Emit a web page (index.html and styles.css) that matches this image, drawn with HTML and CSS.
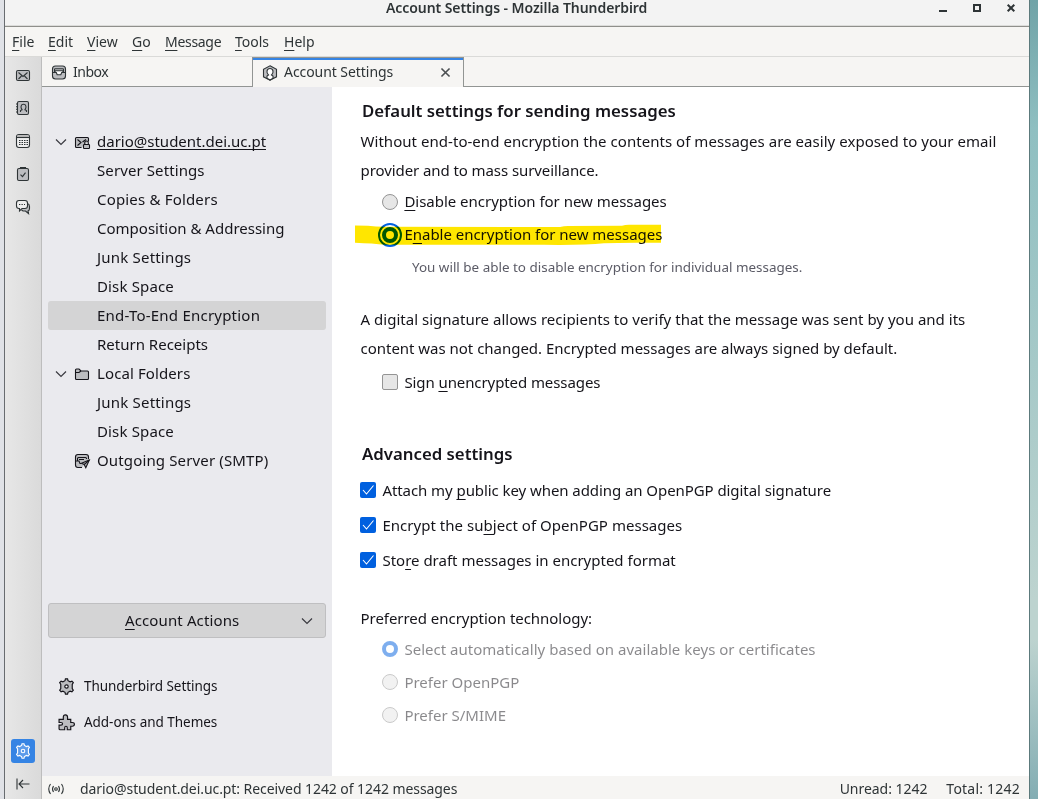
FILE: index.html
```html
<!DOCTYPE html>
<html lang="en">
<head>
<meta charset="utf-8">
<title>Account Settings - Mozilla Thunderbird</title>
<link rel="stylesheet" href="styles.css">
</head>
<body>
<div class="desktop">
<div class="window">
  <header class="titlebar">
    <h1 class="window-title">Account Settings - Mozilla Thunderbird</h1>
    <div class="window-buttons">
      <svg width="8" height="8"><path d="M0 6h8v2H0z" fill="#2e3436"/></svg>
      <svg width="8" height="8"><path d="M1 1h6v6H1z" fill="none" stroke="#2e3436" stroke-width="2"/></svg>
      <svg width="8" height="8"><path d="M.7.7l6.600 6.600M7.300.7L.7 7.300" stroke="#2e3436" stroke-width="2"/></svg>
    </div>
  </header>
  <nav class="menubar">
    <span class="m-file"><u>F</u>ile</span><span class="m-edit"><u>E</u>dit</span><span class="m-view"><u>V</u>iew</span><span class="m-go"><u>G</u>o</span><span class="m-message"><u>M</u>essage</span><span class="m-tools"><u>T</u>ools</span><span class="m-help"><u>H</u>elp</span>
  </nav>
  <div class="body">
    <aside class="spaces">
      <svg class="icon" viewBox="0 0 16 16"><rect class="fill" x="1.500" y="3.500" width="13" height="10" rx="1.500"/><path d="M3.500 5.500l4.500 4 4.500-4M3.500 12l3-3M12.500 12l-3-3"/></svg>
      <svg class="icon" viewBox="0 0 16 16"><rect class="fill" x="2.500" y="1.500" width="11" height="13" rx="1.500"/><path d="M1 4h2M1 6.700h2M1 9.300h2M1 12h2M5.500 12v-1.500l1.500-.8C5.300 7.500 5.800 4.300 8.500 4.300s3.200 3.200 1.500 5.400l1.500.8V12"/></svg>
      <svg class="icon" viewBox="0 0 16 16"><rect x="1.500" y="1.500" width="13" height="13" rx="2.500" fill="#eee"/><path d="M2.500 2h11v2h-11z" fill="#bbb" stroke="none"/><path d="M1.500 4.500h13" /><path d="M4 7.500h9M4 9.500h9M4 11.500h9" stroke-dasharray="1.500 1"/></svg>
      <svg class="icon" viewBox="0 0 16 16"><rect class="fill" x="2.500" y="2.500" width="11" height="12" rx="1.500"/><path d="M5.500 2.500v-1h5v1M5.500 8.700l2 2 3-4"/></svg>
      <svg class="icon" viewBox="0 0 16 16"><path class="fill" d="M12.500 4.500q2 .5 2 3v2q0 2-1.500 2.500l.5 2.500-3-2.500H8l-1.500-1"/><path d="M4 1.500h6q2.500 0 2.500 2.500v3q0 2.500-2.500 2.500H7l-2.500 2.500v-2.500H4Q1.500 9.500 1.500 7V4Q1.500 1.500 4 1.500z" fill="#eee"/><path d="M4 5.500h6" stroke-dasharray="1.300 1.200"/></svg>
      <div class="space-settings"><svg class="icon" viewBox="0 0 16 16"><path d="M6.600 2.500L7 .8h2l.4 1.700 2 1.100 1.700-.6 1.300 1.400-1 1.600v3.900l1 1.600-1.300 1.500-1.700-.6-2 1.100-.4 1.700H7l-.4-1.700-2-1.100-1.700.6-1.300-1.500 1-1.600V6l-1-1.600L2.900 3l1.700.6z"/><circle cx="8" cy="8" r="1.800"/></svg></div>
      <svg class="icon collapse" viewBox="0 0 16 16"><path d="M2 2.500v11M4 8h10.500M8 4L4 8l4 4"/></svg>
    </aside>
    <div class="workspace">
      <div class="tabs">
        <div class="tab tab-inbox"><svg class="icon" viewBox="0 0 16 16"><rect class="fill" x="1.500" y="2" width="13" height="13" rx="3"/><path d="M1.500 8.500h2V5.500q0-.8.800-.8h7.400q.8 0 .8.800v3h2"/><path d="M4.500 6.700h7M3.500 8.500h1.800l.9 2.300h3.600l.9-2.300h1.800l-1-1.800h-7z" fill="#fff"/></svg><span class="t-inbox">Inbox</span></div>
        <div class="tab tab-active"><svg class="icon" viewBox="0 0 16 16"><path class="fill" d="M8 .8l6.500 3.500v7.500L8 15.200l-6.500-3.400V4.300z"/><path d="M5 13.200V11l1.500-1C3.900 7.800 4.700 3.500 8 3.500s4.100 4.300 1.500 6.500l1.500 1v2.200L8 15z" fill="#fff"/></svg><span class="t-account">Account Settings</span><svg class="tab-close" viewBox="0 0 10 10"><path d="M.5.5l9 9M9.500.5l-9 9"/></svg></div>
        <div class="tab-rest"></div>
      </div>
      <div class="columns">
        <aside class="sidebar">
          <ul class="tree">
            <li class="account"><svg class="twisty" viewBox="0 0 12 12"><path d="M1 3.500L6 8.500l5-5"/></svg><svg class="icon" viewBox="0 0 16 16"><path class="fill" d="M7.500 13.500h-5q-1 0-1-1v-8q0-1 1-1h11q1 0 1 1v3"/><path d="M3.500 5.500L7 8.500l-3.500 3M12 5.500L8.500 8"/><rect class="fill" x="9.500" y="10.500" width="6" height="4" rx=".8"/><path d="M10.700 10.500V8.700q0-1.700 1.800-1.700t1.800 1.700v1.800"/></svg><span class="server t-dario">dario@student.dei.uc.pt</span></li>
            <li><span class="t-server">Server Settings</span></li>
            <li><span class="t-copies">Copies &amp; Folders</span></li>
            <li><span class="t-comp">Composition &amp; Addressing</span></li>
            <li><span class="t-junk">Junk Settings</span></li>
            <li><span class="t-disk">Disk Space</span></li>
            <li class="selected"><span class="t-e2e">End-To-End Encryption</span></li>
            <li><span class="t-return">Return Receipts</span></li>
            <li class="account"><svg class="twisty" viewBox="0 0 12 12"><path d="M1 3.500L6 8.500l5-5"/></svg><svg class="icon" viewBox="0 0 16 16"><path class="fill" d="M2.500 13.500q-1 0-1-1V4q0-1 1-1H5l2 2h6.500q1 0 1 1v6.500q0 1-1 1z"/><path d="M1.500 6.500H5L7 5"/></svg><span class="t-local">Local Folders</span></li>
            <li><span class="t-junk">Junk Settings</span></li>
            <li><span class="t-disk">Disk Space</span></li>
            <li class="account no-twisty"><svg class="icon" viewBox="0 0 16 16"><path class="fill" d="M8 14.500H4q-2.500 0-2.500-2.500V4Q1.500 1.500 4 1.500h8q2.500 0 2.500 2.500v2"/><path d="M1.500 8h2V5.500q0-1 1-1h7q1 0 1 1V6M5 6.500h5M1.500 8H5l1 2.500h1.500"/><path class="fill" d="M15.300 7L7.500 10.300l2.700 1.200 1.600 3.300z"/><path d="M15.300 7l-5 4.500"/></svg><span class="t-smtp">Outgoing Server (SMTP)</span></li>
          </ul>
          <button class="actions"><span class="t-actions"><u>A</u>ccount Actions</span><svg class="twisty" viewBox="0 0 12 12"><path d="M1 3.500L6 8.500l5-5"/></svg></button>
          <div class="links">
            <a class="link"><svg class="icon big" viewBox="0 0 16 16"><path class="fill" d="M6.600 2.500L7 .8h2l.4 1.700 2 1.100 1.700-.6 1.300 1.400-1 1.600v3.900l1 1.600-1.300 1.500-1.700-.6-2 1.100-.4 1.700H7l-.4-1.700-2-1.100-1.700.6-1.300-1.500 1-1.600V6l-1-1.600L2.900 3l1.700.6z"/><circle cx="8" cy="8" r="1.600" fill="#fff"/></svg><span class="t-tb">Thunderbird Settings</span></a>
            <a class="link"><svg class="icon big" viewBox="0 0 16 16"><path class="fill" d="M1 13.800v-3.300h1.800c2 0 2-2.500 0-2.500H1V5h4V3c0-3 4-3 4 0v2h3v3h1.500c2.600 0 2.600 3.500 0 3.500H12v3.300H8.700V13c0-2-2.400-2-2.400 0v1.800H2q-1 0-1-1z"/></svg><span class="t-addons">Add-ons and Themes</span></a>
          </div>
        </aside>
        <main class="content">
          <h2 class="h-default">Default settings for sending messages</h2>
          <p class="para"><span class="p1">Without end-to-end encryption the contents of messages are easily exposed to your email</span><br><span class="p2">provider and to mass surveillance.</span></p>
          <label class="option raised"><i class="radio"></i><span class="o-disable"><u>D</u>isable encryption for new messages</span></label>
          <label class="option raised marked"><i class="radio checked focused"></i><span class="o-enable">E<u>n</u>able encryption for new messages</span>
            <svg class="marker" viewBox="0 0 306 22"><path d="M0 1.500l13 .3Q22 3 32 2.800L205 3q4-1 8-1l54-.2q3-1 7-1H306V18.800q-40-.5-57 .5-20 2-60 1.500H30Q18 19.500 0 18.800z"/></svg></label>
          <p class="note"><span class="o-note">You will be able to disable encryption for individual messages.</span></p>
          <p class="para signature"><span class="p3">A digital signature allows recipients to verify that the message was sent by you and its</span><br><span class="p4">content was not changed. Encrypted messages are always signed by default.</span></p>
          <label class="option"><i class="box"></i><span class="o-sign">Sign <u>u</u>nencrypted messages</span></label>
          <h2 class="advanced h-adv">Advanced settings</h2>
          <label class="check"><i class="box checked"><svg viewBox="0 0 16 16"><path d="M3 8l3.500 4L13.500 3.500"/></svg></i><span class="c1">Attach my <u>p</u>ublic key when adding an OpenPGP digital signature</span></label>
          <label class="check"><i class="box checked"><svg viewBox="0 0 16 16"><path d="M3 8l3.500 4L13.500 3.500"/></svg></i><span class="c2">Encrypt the su<u>b</u>ject of OpenPGP messages</span></label>
          <label class="check"><i class="box checked"><svg viewBox="0 0 16 16"><path d="M3 8l3.500 4L13.500 3.500"/></svg></i><span class="c3">Sto<u>r</u>e draft messages in encrypted format</span></label>
          <p class="para technology"><span class="p5">Preferred encryption technology:</span></p>
          <label class="option disabled"><i class="radio checked"></i><span class="d1">Select automatically based on available keys or certificates</span></label>
          <label class="option disabled"><i class="radio"></i><span class="d2">Prefer OpenPGP</span></label>
          <label class="option disabled"><i class="radio"></i><span class="d3">Prefer S/MIME</span></label>
        </main>
      </div>
      <footer class="statusbar">
        <svg class="icon" viewBox="0 0 16 16"><circle cx="8" cy="8" r="1.300"/><path d="M5.500 5q-2 3 0 6M10.500 5q2 3 0 6M2.500 3Q-1 8 2.500 13M13.500 3Q17 8 13.500 13"/></svg>
        <span class="status-text">dario@student.dei.uc.pt: Received 1242 of 1242 messages</span>
        <span class="unread">Unread: 1242</span><span class="total">Total: 1242</span>
      </footer>
    </div>
  </div>
</div>
</div>
</body>
</html>
```
FILE: styles.css
```css
* { box-sizing: border-box; }
body { margin: 0; font-family: "Noto Sans", "Open Sans", sans-serif; font-size: 15px; color: #15141a; overflow: hidden; }
h1, h2, p, ul { margin: 0; padding: 0; }
span { white-space: nowrap; }
u { text-decoration: underline; text-decoration-thickness: 1px; text-underline-offset: 3px; text-decoration-skip-ink: none; }
svg { display: block; flex: none; fill: none; overflow: visible; }
.desktop { display: flex; height: 799px; padding: 0 8px 0 4px; background: linear-gradient(90deg, #e0e2e7 50%, transparent 50%), linear-gradient(#70a3a7, #8fbfc1 16%, #bdd3cf 75%, #bdd3cf 80%, #83adb3); }
.window { flex: 1; display: flex; flex-direction: column; border-left: 1px solid #686c70; border-right: 1px solid #5c7a7c; background: #f6f5f3; }
.titlebar { height: 27px; flex: none; display: flex; align-items: flex-start; background: #f3f3f3; border-bottom: 1px solid #8f8f8b; box-shadow: inset 0 -1px #dcdcda; }
.window-title { flex: 1; padding-left: 381px; font-size: 14px; line-height: 16px; font-weight: 600; color: #2e3436; white-space: nowrap; letter-spacing: -.07px; }
.window-buttons { display: flex; gap: 26px; padding: 4px 14px 0 0; }
.menubar { height: 30px; flex: none; padding-left: 7px; display: flex; border-bottom: 1px solid #dadad8; color: #2e3436; font-size: 14px; line-height: 30px; }
.m-file { width: 36px; } .m-edit { width: 39px; } .m-view { width: 45px; } .m-go { width: 33px; } .m-message { width: 70px; letter-spacing: -.3px; } .m-tools { width: 49px; }
.body { flex: 1; min-height: 0; display: flex; }
.icon { width: 16px; height: 16px; stroke: #2e3436; stroke-width: 1.1; }
.fill { fill: #bcbdc0; }
.spaces { width: 37px; flex: none; display: flex; flex-direction: column; align-items: center; gap: 17px; padding-top: 10px; border-right: 1px solid #bdbdbd; background: linear-gradient(90deg, #e7e7e7, #dadada); }
.space-settings { width: 24px; height: 24px; margin-top: auto; display: grid; place-items: center; border-radius: 3px; background: #3584e4; }
.space-settings .icon { stroke: #fff; fill: #5b9bea; }
.collapse { margin: -4px 0 7px; }
.workspace { flex: 1; display: flex; flex-direction: column; min-width: 0; }
.tabs { display: flex; height: 30px; flex: none; color: #2e3436; font-size: 14px; line-height: 28px; }
.tab { display: flex; align-items: center; }
.tab-inbox { width: 210px; padding-left: 9px; gap: 6px; border-bottom: 1px solid #929593; }
.tab-active { width: 212px; padding: 0 13px 0 9px; gap: 6px; border: solid #929593; border-width: 1px 1px 0; box-shadow: inset 0 2px #3584e4; }
.tab-active span { padding-bottom: 2px; letter-spacing: -.06px; }
.t-inbox { letter-spacing: -.5px; }
.tab-rest { flex: 1; border-bottom: 1px solid #929593; }
.tab-close { width: 9px; height: 9px; margin-left: auto; stroke: #4b4f51; stroke-width: 1.8; }
.columns { flex: 1; min-height: 0; display: flex; }
.sidebar { width: 290px; flex: none; display: flex; flex-direction: column; padding: 40px 6px 0; background: #eaeaee; }
.sidebar .icon { stroke: #15141a; }
.tree { list-style: none; }
.tree li { height: 29px; display: flex; align-items: center; padding-left: 49px; border-radius: 3px; line-height: 29px; }
.tree .selected { background: #d4d4d5; }
.tree .account { padding-left: 7px; gap: 7px; }
.tree .account .no-twisty .icon { margin-left: 2px; }
.tree .no-twisty { padding-left: 26px; }
.t-server { letter-spacing: .1px; } .t-copies { letter-spacing: .18px; } .t-junk { letter-spacing: .2px; } .t-disk { letter-spacing: .15px; }
.t-e2e { letter-spacing: .22px; } .t-local { letter-spacing: .1px; } .t-smtp { letter-spacing: .14px; } .t-actions { letter-spacing: .12px; padding-bottom: 2px; }
.twisty { width: 12px; height: 12px; stroke: #3a3a40; stroke-width: 1.2; }
.server { border-bottom: 1px solid #15141a; line-height: 18px; height: 17px; display: flex; align-items: center; }
.actions { height: 35px; flex: none; margin-top: 128px; padding: 0 12px 0 76px; display: flex; align-items: center; justify-content: space-between; border: 1px solid #bfbfc1; border-radius: 3px; background: #d4d4d5; color: #15141a; font: inherit; }
.links { padding: 30px 0 0 10px; }
.link { display: flex; height: 36px; align-items: center; gap: 9px; font-size: 13.500px; letter-spacing: -.04px; }
.link .icon { width: 17px; height: 17px; }
.content { flex: 1; background: #fff; padding: 10px 0 0 28px; }
.content h2 { height: 28px; padding-left: 2px; line-height: 28px; font-size: 16.800px; font-weight: 600; white-space: nowrap; }
.para { line-height: 29px; padding: 2px 0 0 .5px; }
.p1 { letter-spacing: .04px; } .p2 { letter-spacing: -.08px; } .p3 { letter-spacing: .015px; } .p4 { letter-spacing: -.02px; } .p5 { letter-spacing: -.04px; }
.option { position: relative; display: flex; align-items: center; height: 33px; padding-left: 22px; gap: 6px; }
.option span, .check span { padding-left: .4px; }
.raised span { padding-bottom: 2px; }
.o-disable, .o-enable { letter-spacing: -.02px; } .o-sign { letter-spacing: -.09px; } .c1 { letter-spacing: -.07px; } .c2 { letter-spacing: .03px; } .d1 { letter-spacing: .02px; }
.radio { width: 16px; height: 16px; flex: none; border: 1px solid #949494; border-radius: 50%; background: #e6e6e6; }
.radio.checked { border: 4px solid #0060df; background: #fff; }
.radio.focused { outline: 2px solid #0060df; outline-offset: 2px; }
.marker { position: absolute; left: -5px; top: 6px; width: 306px; height: 22px; fill: #ffe600; mix-blend-mode: multiply; }
.note { height: 31px; padding: 1px 0 0 52px; line-height: 31px; font-size: 13.450px; color: #5b5b66; }
.signature { padding-top: 23px; }
.box { width: 16px; height: 16px; flex: none; border: 1px solid #949494; border-radius: 2px; background: #e6e6e6; }
.box.checked { border: 0; background: #0060df; }
.box svg { stroke: #fff; stroke-width: 1.1; }
.signature + .option { margin-top: 2px; }
.content .advanced { margin: 42px 0 4px; }
.check { display: flex; align-items: center; height: 35px; gap: 6px; }
.technology { padding-top: 27px; margin-bottom: -1px; }
.technology + .option { margin-top: 0; }
.disabled { opacity: .5; }
.statusbar { height: 23px; flex: none; display: flex; align-items: center; padding: 3px 9px 0 6px; font-size: 14px; color: #2e3436; background: #f6f5f3; }
.statusbar span { padding-bottom: 2px; }
.statusbar .status-text { flex: 1; padding-left: 16px; letter-spacing: -.07px; }
.unread { margin-right: 19px; letter-spacing: -.04px; }
.total { letter-spacing: .22px; }
```
